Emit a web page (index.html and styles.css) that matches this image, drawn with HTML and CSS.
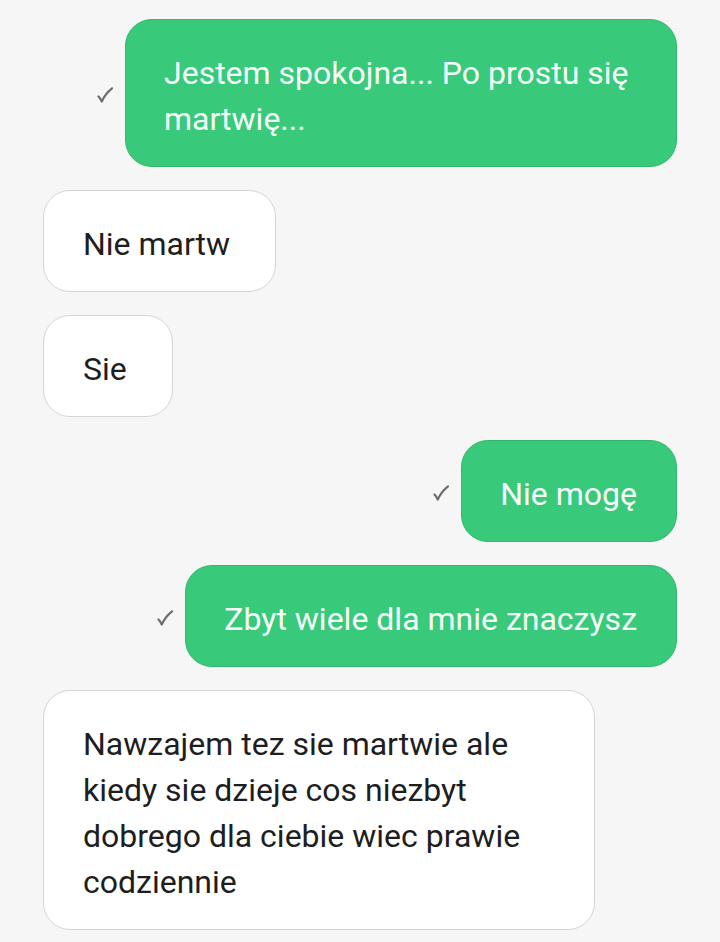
FILE: index.html
```html
<!DOCTYPE html>
<html lang="pl">
<head>
<meta charset="utf-8">
<link rel="stylesheet" href="styles.css">
</head>
<body>
<div class="chat">
  <div class="row out"><svg class="tick" viewBox="0 0 16 16"><path d="M1.5 9.5 Q3.5 11.5 4.8 14.5 Q8 7 15 1.3"/></svg><div class="bubble green">Jestem spokojna... Po prostu się martwię...</div></div>
  <div class="row in"><div class="bubble white">Nie martw</div></div>
  <div class="row in"><div class="bubble white">Sie</div></div>
  <div class="row out"><svg class="tick" viewBox="0 0 16 16"><path d="M1.5 9.5 Q3.5 11.5 4.8 14.5 Q8 7 15 1.3"/></svg><div class="bubble green">Nie mogę</div></div>
  <div class="row out"><svg class="tick" viewBox="0 0 16 16"><path d="M1.5 9.5 Q3.5 11.5 4.8 14.5 Q8 7 15 1.3"/></svg><div class="bubble green">Zbyt wiele dla mnie znaczysz</div></div>
  <div class="row in"><div class="bubble white">Nawzajem tez sie martwie ale kiedy sie dzieje cos niezbyt dobrego dla ciebie wiec prawie codziennie</div></div>
</div>
</body>
</html>
```
FILE: styles.css
```css
html, body {
  margin: 0;
  padding: 0;
  background: #f5f6f5;
}
.chat {
  display: flex;
  flex-direction: column;
  gap: 23px;
  padding: 19px 43px 0 43px;
  font-family: Roboto, "Noto Sans", sans-serif;
}
.row {
  display: flex;
  align-items: center;
}
.row.out {
  justify-content: flex-end;
}
.row.in {
  justify-content: flex-start;
}
.tick {
  width: 16px;
  height: 16px;
  margin-right: 12px;
  margin-top: 3px;
  fill: none;
  stroke: #6e6e6e;
  stroke-width: 2.2;
  stroke-linecap: round;
  stroke-linejoin: round;
}
.bubble {
  max-width: 552px;
  box-sizing: border-box;
  padding: 30px 40px 24px 39px;
  border-radius: 27px;
  font-size: 32px;
  line-height: 46px;
  border: 1px solid transparent;
}
.green {
  background: #38c97a;
  border-color: #33b86f;
  color: #f7fffa;
  padding-left: 38px;
  padding-right: 39px;
}
.white {
  background: #ffffff;
  border-color: #d4d6d4;
  color: #1e1e1e;
  padding-right: 45px;
}
```
